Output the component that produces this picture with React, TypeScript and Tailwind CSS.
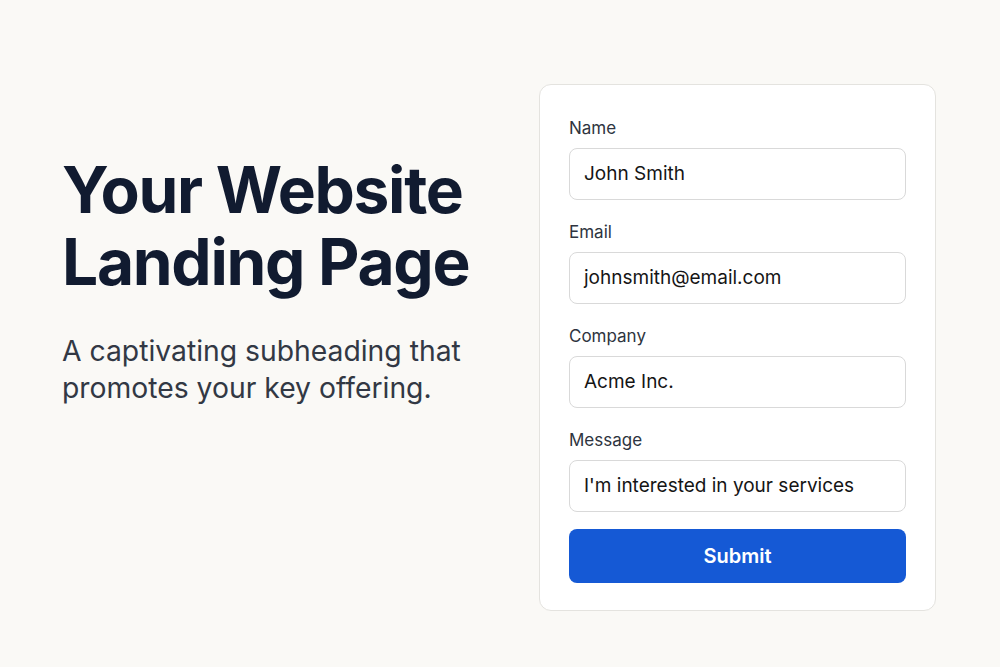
const fields = [
  { label: "Name", value: "John Smith" },
  { label: "Email", value: "johnsmith@email.com" },
  { label: "Company", value: "Acme Inc." },
  { label: "Message", value: "I'm interested in your services" },
];

export default function App() {
  return (
    <div className="min-h-[667px] w-full bg-[#faf9f6] [font-family:Inter,'Noto_Sans',sans-serif]">
      <div className="flex items-start justify-between pl-[62px] pr-[64px] pt-[84px]">
        {/* Hero copy */}
        <div className="w-[440px] pt-[70px]">
          <h1 className="text-[64px] font-bold leading-[72px] tracking-[-0.02em] text-[#111b30]">
            Your Website Landing Page
          </h1>
          <p className="mt-[35px] text-[28.3px] leading-[37px] text-[#323844]">
            A captivating subheading that promotes your key offering.
          </p>
        </div>

        {/* Form card */}
        <div className="w-[397px] rounded-xl border border-[#e4e3df] bg-white px-[29px] pb-[27px] pt-[31px]">
          <div className="flex flex-col gap-5">
            {fields.map((f) => (
              <div key={f.label} className="flex flex-col">
                <label className="mb-2 text-[17px] leading-6 text-[#2e3440]">{f.label}</label>
                <div className="flex h-[52px] items-center rounded-lg border border-[#d9d9d9] bg-white px-[14px] text-[19px] text-[#151515]">
                  {f.value}
                </div>
              </div>
            ))}
          </div>
          <button className="mt-[17px] flex h-[54px] w-full items-center justify-center rounded-lg bg-[#1559d5] text-[20px] font-semibold text-white">
            Submit
          </button>
        </div>
      </div>
    </div>
  );
}
